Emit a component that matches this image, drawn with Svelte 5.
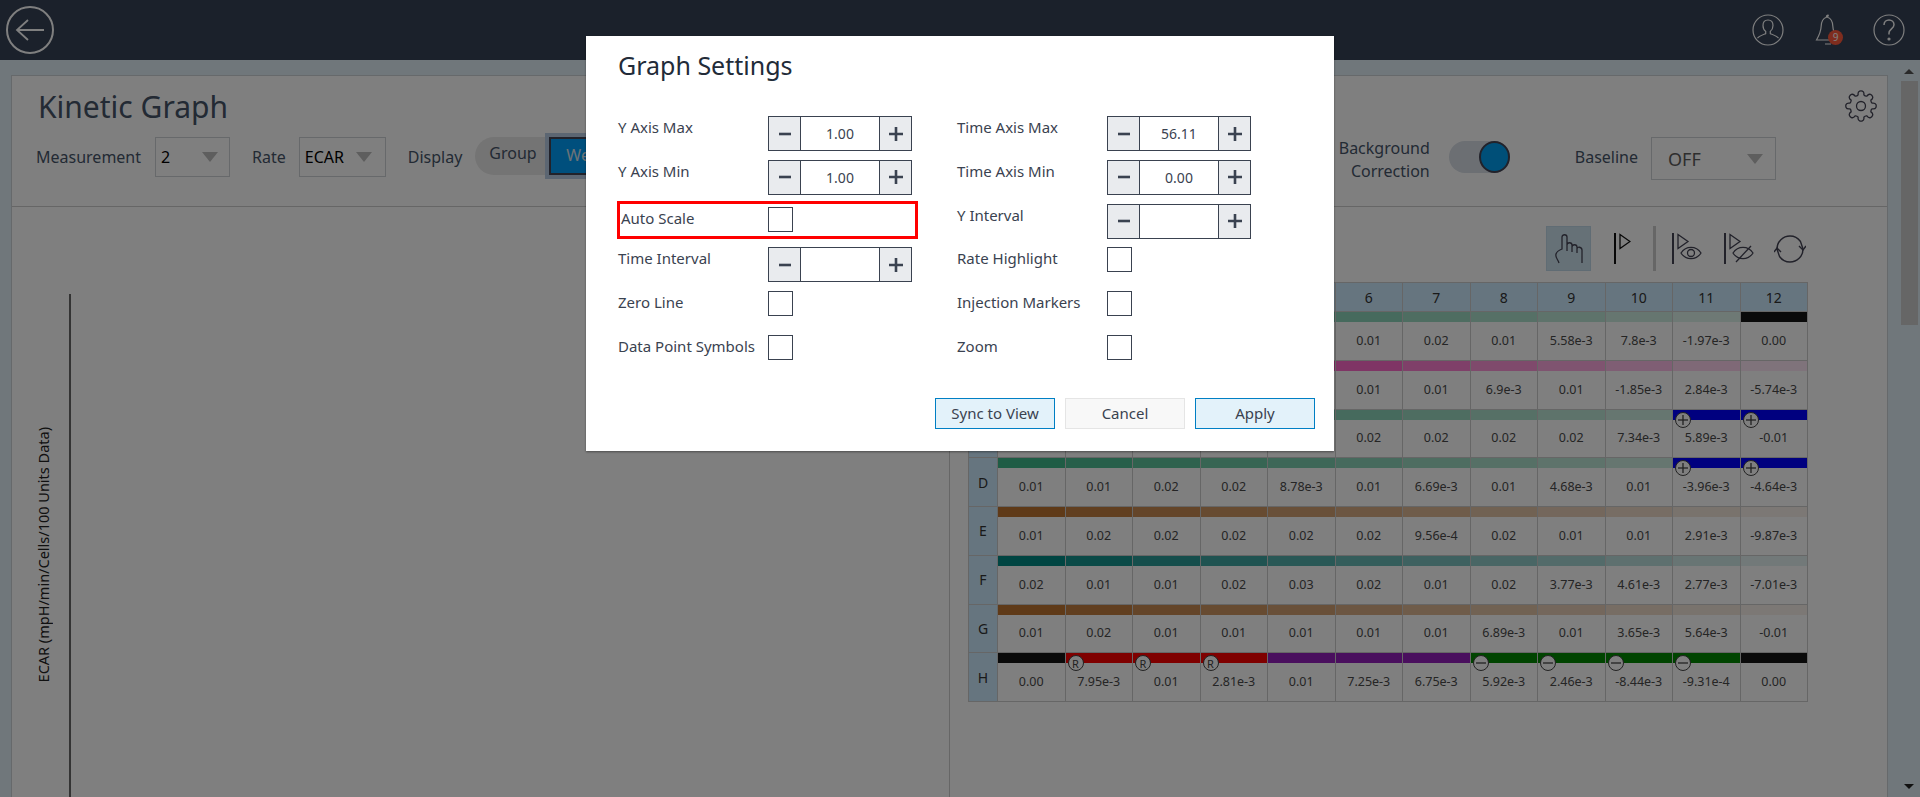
<script>
  const base = { green: '#3eb88a', pink: '#ff05a6', brown: '#be7430', teal: '#008a84' };
  const black = '#141414';
  const blue = '#0000ff';
  const red = '#ff0000';
  const purple = '#941ebc';
  const dark = '#008800';

  const fade = (color, from = 0, to = 11) => {
    const out = [];
    for (let c = 0; c < 12; c++) {
      if (c >= from && c <= to) out.push({ color, alpha: 1 - c * 0.0818 });
      else out.push({ color: black, alpha: 1 });
    }
    return out;
  };
  const solid = (c) => ({ color: c, alpha: 1 });

  const withTail = (strip, tail, badge) => {
    const next = strip.map((s) => ({ ...s }));
    for (const i of tail) { next[i] = { ...solid(badge), mark: '+' }; }
    return next;
  };

  const hRow = [
    solid(black),
    { ...solid(red), mark: 'R' }, { ...solid(red), mark: 'R' }, { ...solid(red), mark: 'R' },
    solid(purple), solid(purple), solid(purple),
    { ...solid(dark), mark: '-' }, { ...solid(dark), mark: '-' }, { ...solid(dark), mark: '-' }, { ...solid(dark), mark: '-' },
    solid(black)
  ];

  // the first five wells of rows A to C sit behind the dialog
  const rows = [
    { id: '', strip: fade(base.green, 0, 10), values: ['','','','','','0.01','0.02','0.01','5.58e-3','7.8e-3','-1.97e-3','0.00'] },
    { id: '', strip: fade(base.pink), values: ['','','','','','0.01','0.01','6.9e-3','0.01','-1.85e-3','2.84e-3','-5.74e-3'] },
    { id: '', strip: withTail(fade(base.green), [10, 11], blue), values: ['','','','','','0.02','0.02','0.02','0.02','7.34e-3','5.89e-3','-0.01'] },
    { id: 'D', strip: withTail(fade(base.green), [10, 11], blue), values: ['0.01','0.01','0.02','0.02','8.78e-3','0.01','6.69e-3','0.01','4.68e-3','0.01','-3.96e-3','-4.64e-3'] },
    { id: 'E', strip: fade(base.brown), values: ['0.01','0.02','0.02','0.02','0.02','0.02','9.56e-4','0.02','0.01','0.01','2.91e-3','-9.87e-3'] },
    { id: 'F', strip: fade(base.teal), values: ['0.02','0.01','0.01','0.02','0.03','0.02','0.01','0.02','3.77e-3','4.61e-3','2.77e-3','-7.01e-3'] },
    { id: 'G', strip: fade(base.brown), values: ['0.01','0.02','0.01','0.01','0.01','0.01','0.01','6.89e-3','0.01','3.65e-3','5.64e-3','-0.01'] },
    { id: 'H', strip: hRow, values: ['0.00','7.95e-3','0.01','2.81e-3','0.01','7.25e-3','6.75e-3','5.92e-3','2.46e-3','-8.44e-3','-9.31e-4','0.00'] }
  ];

  const columns = ['', '', '', '', '', 6, 7, 8, 9, 10, 11, 12];

  // left and right column of the dialog, row by row
  const settings = [
    { label: 'Y Axis Max', kind: 'step', value: '1.00' },
    { label: 'Time Axis Max', kind: 'step', value: '56.11' },
    { label: 'Y Axis Min', kind: 'step', value: '1.00' },
    { label: 'Time Axis Min', kind: 'step', value: '0.00' },
    { label: 'Auto Scale', kind: 'check', marked: true },
    { label: 'Y Interval', kind: 'step', value: '' },
    { label: 'Time Interval', kind: 'step', value: '' },
    { label: 'Rate Highlight', kind: 'check' },
    { label: 'Zero Line', kind: 'check' },
    { label: 'Injection Markers', kind: 'check' },
    { label: 'Data Point Symbols', kind: 'check' },
    { label: 'Zoom', kind: 'check' }
  ];

  function gearPath() {
    const cx = 16, cy = 16, teeth = 8;
    let d = '';
    for (let i = 0; i < teeth; i++) {
      const a = (i / teeth) * Math.PI * 2 - Math.PI / 2;
      const step = (Math.PI * 2) / teeth;
      const pt = (r, t) => `${(cx + r * Math.cos(t)).toFixed(2)} ${(cy + r * Math.sin(t)).toFixed(2)}`;
      d += (i === 0 ? 'M' : 'L') + pt(11.5, a - step * 0.32);
      d += ' Q' + pt(14.5, a - step * 0.3) + ' ' + pt(15, a - step * 0.12);
      d += ' Q' + pt(15.5, a) + ' ' + pt(15, a + step * 0.12);
      d += ' Q' + pt(14.5, a + step * 0.3) + ' ' + pt(11.5, a + step * 0.32);
      d += ' Q' + pt(10.5, a + step * 0.5) + ' ' + pt(11.5, a + step * 0.68) + ' ';
    }
    return d + 'Z';
  }
</script>

<div class="page">
  <header class="topbar">
    <svg class="back" width="48" height="48" viewBox="0 0 48 48" fill="none" stroke="#fff" stroke-width="2">
      <circle cx="24" cy="24" r="23" />
      <path d="M38 24H11M22 14 11 24l11 10" stroke-width="1.8" />
    </svg>
    <div class="top-icons">
      <svg width="32" height="32" viewBox="0 0 32 32" fill="none" stroke="#fff" stroke-width="1.2">
        <circle cx="16" cy="16" r="15" />
        <path d="M16 6c-3.4 0-5 2.6-5 5.4 0 2.4 1 4.6 2.7 6v2.2c-3 1.2-6.5 2.4-8.2 4.6M16 6c3.4 0 5 2.6 5 5.4 0 2.4-1 4.6-2.7 6v2.2c3 1.2 6.5 2.4 8.2 4.6" />
      </svg>
      <div class="bell">
        <svg width="26" height="32" viewBox="0 0 26 32" fill="none" stroke="#fff" stroke-width="1.2">
          <path d="M13 1c-1 0-1.6.8-1.6 2.2C7.6 4.4 6.4 8 6.2 12c-.3 6-2.4 10-4.7 14h21c-2.300-4-4.400-8-4.700-14-.2-4-1.400-7.600-5.200-8.800C12.600 1.800 14 1 13 1ZM10 30h6" />
        </svg>
        <span class="badge-count">9</span>
      </div>
      <svg width="32" height="32" viewBox="0 0 32 32" fill="none" stroke="#fff" stroke-width="1.2">
        <circle cx="16" cy="16" r="15" />
        <path d="M11 11c0-3 2.200-5 5-5s5 2 5 4.800c0 3.800-5 4.400-5 8.200v1.500" stroke-width="1.500" />
        <circle cx="16" cy="25" r="1" fill="#fff" />
      </svg>
    </div>
  </header>

  <div class="workspace">
    <main class="card">
      <section class="card-head">
        <div class="title-row">
          <h1>Kinetic Graph</h1>
          <svg width="32" height="32" viewBox="0 0 32 32" fill="none" stroke="#445" stroke-width="1.3">
            <path d={gearPath()} />
            <circle cx="16" cy="16" r="4.500" />
          </svg>
        </div>
        <div class="toolbar">
          <span class="tool-label first">Measurement</span>
          <div class="select measure"><span>2</span><i></i></div>
          <span class="tool-label rate">Rate</span>
          <div class="select rate-select"><span>ECAR</span><i></i></div>
          <span class="tool-label display">Display</span>
          <div class="segments">
            <span class="seg-group">Group</span>
            <span class="seg-well">Well</span>
          </div>
          <div class="correction">Background<br />Correction</div>
          <div class="switch"><span></span></div>
          <span class="tool-label baseline">Baseline</span>
          <div class="select base-select"><span>OFF</span><i></i></div>
        </div>
      </section>

      <section class="card-body">
        <div class="graph">
          <div class="axis-title">ECAR (mpH/min/Cells/100 Units Data)</div>
          <div class="axis-line"></div>
        </div>

        <div class="plate">
          <div class="tools">
            <button class="tool active" aria-label="Select">
              <svg width="28" height="30" viewBox="0 0 28 30" fill="none" stroke="#445" stroke-width="1.300">
                <path d="M4 29C3 25 0 24 1 20c.7-2.600 3.500-4 6-5V3c0-3 5-3 5 0v14M12 11c0-3 5-3 5 0v7M17 13c0-3 5-3 5 0v6M22 15c0-3 5-2 5 1v13" />
              </svg>
            </button>
            <svg class="flag" width="17" height="31" viewBox="0 0 17 31" fill="none" stroke="#111">
              <path d="M1 0v31" stroke-width="2" />
              <path d="M6 1.500 16 8.500 6 15.500Z" stroke-width="1.300" />
            </svg>
            <span class="sep"></span>
            <svg class="flag-eye" width="30" height="31" viewBox="0 0 30 31" fill="none" stroke="#445">
              <path d="M1 0v31" stroke-width="2" />
              <path d="M6 1.500 16 8.500 6 15.500Z" stroke-width="1.300" />
              <path d="M9 20c5-7.500 15-7.500 20 0-5 7.500-15 7.500-20 0Z" stroke-width="1.300" />
              <circle cx="19" cy="20" r="3.500" stroke-width="1.300" />
            </svg>
            <svg class="flag-hide" width="30" height="31" viewBox="0 0 30 31" fill="none" stroke="#445">
              <path d="M1 0v31" stroke-width="2" />
              <path d="M6 1.500 16 8.500 6 15.500Z" stroke-width="1.300" />
              <path d="M9 20c5-7.500 15-7.500 20 0-5 7.500-15 7.500-20 0Z" stroke-width="1.300" />
              <path d="M12 29 27 13" stroke-width="1.300" />
            </svg>
            <svg class="refresh" width="32" height="32" viewBox="0 0 32 32" fill="none" stroke="#445" stroke-width="1.400">
              <path d="M3 16C3 8.500 9 3 16 3c4.500 0 8 2 10.500 5.500L29 16M29 16c0 7.500-6 13-13 13-4.500 0-8-2-10.500-5.500L3 16" />
              <path d="M25 13l4 4 3-4M0 19l3-4 4 4" />
            </svg>
          </div>

          <div class="table">
            <div class="head corner"></div>
            {#each columns as col}
              <div class="head">{col}</div>
            {/each}
            {#each rows as row}
              <div class="head row-id">{row.id}</div>
              {#each row.values as value, i}
                <div class="cell">
                  <div class="strip" style="background:{row.strip[i].color};opacity:{row.strip[i].alpha}"></div>
                  {#if row.strip[i].mark}
                    <span class="mark">
                      {#if row.strip[i].mark === 'R'}R
                      {:else}
                        <svg width="12" height="12" viewBox="0 0 12 12" stroke="#444" stroke-width="1.300">
                          <path d="M1 6h10" />
                          {#if row.strip[i].mark === '+'}<path d="M6 1v10" />{/if}
                        </svg>
                      {/if}
                    </span>
                  {/if}
                  <div class="value">{value}</div>
                </div>
              {/each}
            {/each}
          </div>
        </div>
      </section>
    </main>

    <aside class="scrollbar">
      <i class="arrow up"></i>
      <div class="thumb"></div>
      <i class="arrow down"></i>
    </aside>
  </div>

  <div class="overlay"></div>

  <div class="dialog">
    <h2>Graph Settings</h2>
    <div class="form">
      {#each settings as item}
        <div class="field" class:marked={item.marked}>
          <span class="field-label">{item.label}</span>
          {#if item.kind === 'step'}
            <div class="stepper">
              <span class="step">
                <svg width="12" height="12" viewBox="0 0 12 12"><path d="M0 6h12" stroke="#3a4250" stroke-width="2.600" /></svg>
              </span>
              <span class="step-value">{item.value}</span>
              <span class="step">
                <svg width="14" height="14" viewBox="0 0 14 14"><path d="M0 7h14M7 0v14" stroke="#3a4250" stroke-width="2.600" /></svg>
              </span>
            </div>
          {:else}
            <span class="checkbox"></span>
          {/if}
        </div>
      {/each}
    </div>
    <div class="actions">
      <button class="primary">Sync to View</button>
      <button class="plain">Cancel</button>
      <button class="primary">Apply</button>
    </div>
  </div>
</div>

<style>
  :global(body) {
    margin: 0;
    overflow: hidden;
  }

  .page {
    position: relative;
    height: 797px;
    overflow: hidden;
    display: flex;
    flex-direction: column;
    background: #e0eef6;
    font-family: "Noto Sans", sans-serif;
    color: #465469;
  }

  .topbar {
    height: 60px;
    flex: none;
    display: flex;
    align-items: center;
    justify-content: space-between;
    padding: 0 15px 0 6px;
    background: #364256;
    box-sizing: border-box;
  }

  .top-icons {
    display: flex;
    align-items: center;
    gap: 30px;
  }

  .bell {
    position: relative;
    display: flex;
    margin-right: 2px;
    margin-left: 1px;
  }

  .badge-count {
    position: absolute;
    left: 13px;
    top: 16px;
    width: 15px;
    height: 15px;
    border-radius: 50%;
    background: #ff5a3c;
    color: #fff;
    font-size: 10px;
    line-height: 15px;
    text-align: center;
  }

  .workspace {
    flex: 1;
    display: flex;
    min-height: 0;
    padding: 15px 0 0 11px;
  }

  .card {
    flex: 1;
    background: #fff;
    border: 1px solid #ccd2d6;
    border-bottom: none;
    box-sizing: border-box;
    display: flex;
    flex-direction: column;
    min-width: 0;
  }

  .card-head {
    height: 131px;
    flex: none;
    box-sizing: border-box;
    padding: 14px 10px 0 24px;
    border-bottom: 1px solid #ccc;
  }

  .title-row {
    height: 40px;
    display: flex;
    align-items: flex-start;
    justify-content: space-between;
    margin-bottom: 7px;
  }

  h1 {
    margin: 0 0 0 2px;
    font-size: 30px;
    font-weight: 400;
    line-height: 34px;
  }

  .toolbar {
    height: 40px;
    display: flex;
    align-items: center;
    font-size: 16px;
    margin-right: 101px;
  }

  .tool-label {
    white-space: nowrap;
    margin-right: 13px;
  }

  .tool-label.first {
    margin-right: 14px;
  }

  .tool-label.rate {
    margin-left: 22px;
  }

  .tool-label.display {
    margin-left: 22px;
  }

  .tool-label.baseline {
    margin-left: 65px;
  }

  .select {
    box-sizing: border-box;
    height: 40px;
    border: 1px solid #ced3d6;
    display: flex;
    align-items: center;
    justify-content: space-between;
    padding: 0 11px 0 5px;
    color: #000;
    font-size: 16px;
    flex: none;
  }

  .select i {
    width: 0;
    height: 0;
    border-left: 8px solid transparent;
    border-right: 8px solid transparent;
    border-top: 10px solid #bcbcbc;
  }

  .measure {
    width: 75px;
  }

  .rate-select {
    width: 87px;
    padding-left: 5px;
    padding-right: 13px;
  }

  .base-select {
    width: 125px;
    height: 43px;
    margin-top: 3px;
    padding: 0 12px 0 16px;
    font-size: 18px;
    color: #5c5c5c;
  }

  .segments {
    display: flex;
    width: 260px;
    height: 38px;
    margin-top: -2px;
    border-radius: 19px 0 0 19px;
    background: #e8e8e8;
    position: relative;
    flex: none;
  }

  .seg-group {
    padding: 0 0 4px 14px;
    width: 56px;
    line-height: 32px;
    flex: none;
  }

  .seg-well {
    position: absolute;
    left: 74px;
    top: 0;
    height: 38px;
    box-sizing: border-box;
    width: 120px;
    padding-left: 15px;
    border: 2px solid #445;
    outline: 4px solid #b8cde4;
    background: #009ffa;
    color: #dbe6ee;
    line-height: 32px;
  }

  .correction {
    margin-left: auto;
    margin-top: 5px;
    text-align: right;
    line-height: 23px;
    white-space: nowrap;
  }

  .switch {
    width: 61px;
    height: 32px;
    margin-left: 19px;
    border-radius: 16px;
    background: #d8dee6;
    display: flex;
    justify-content: flex-end;
    flex: none;
  }

  .switch span {
    width: 31px;
    height: 32px;
    box-sizing: border-box;
    border: 2px solid #445;
    border-radius: 50%;
    background: #009ff0;
  }

  .card-body {
    flex: 1;
    display: flex;
    min-height: 0;
  }

  .graph {
    width: 938px;
    flex: none;
    display: flex;
    border-right: 1px solid #ccc;
    box-sizing: border-box;
    padding-left: 21px;
  }

  .axis-title {
    writing-mode: vertical-rl;
    transform: rotate(180deg);
    align-self: flex-start;
    margin-top: 220px;
    width: 20px;
    line-height: 20px;
    font-size: 14.5px;
    white-space: nowrap;
    color: #222;
  }

  .axis-line {
    width: 2px;
    background: #666;
    margin: 87px 0 0 16px;
  }

  .plate {
    padding: 19px 0 0 18px;
  }

  .tools {
    height: 45px;
    display: flex;
    align-items: center;
    justify-content: flex-end;
    margin-bottom: 11px;
    width: 838px;
  }

  .tool {
    width: 45px;
    height: 45px;
    padding: 0;
    border: 1px solid #c0d8e8;
    background: #cde2ee;
    display: flex;
    align-items: center;
    justify-content: center;
  }

  .flag {
    margin-left: 23px;
  }

  .sep {
    width: 3px;
    height: 45px;
    background: #ccc;
    margin: 0 16px 0 22px;
  }

  .flag-hide {
    margin-left: 22px;
  }

  .refresh {
    margin-left: 20px;
  }

  .table {
    display: grid;
    grid-template-columns: 29px repeat(12, 67.5px);
    grid-template-rows: 29px repeat(8, 48.75px);
    width: max-content;
    border-left: 1px solid #ccc;
    border-top: 1px solid #ccc;
  }

  .head {
    background: #cceafe;
    border-right: 1px solid #ccc;
    border-bottom: 1px solid #ccc;
    display: flex;
    align-items: center;
    justify-content: center;
    font-size: 14px;
    color: #333;
  }

  .cell {
    position: relative;
    display: flex;
    flex-direction: column;
    border-right: 1px solid #ccc;
    border-bottom: 1px solid #ccc;
    min-width: 0;
  }

  .strip {
    height: 10px;
    flex: none;
  }

  .value {
    flex: 1;
    display: flex;
    align-items: center;
    justify-content: center;
    font-size: 12.5px;
    color: #4a4a4a;
    white-space: nowrap;
    padding-bottom: 1px;
  }

  .mark {
    position: absolute;
    left: 2px;
    top: 2px;
    width: 16px;
    height: 16px;
    box-sizing: border-box;
    border: 1.5px solid #444;
    border-radius: 50%;
    background: #fff;
    display: flex;
    align-items: center;
    justify-content: center;
    font-size: 11px;
    color: #444;
  }

  .scrollbar {
    width: 32px;
    flex: none;
    position: relative;
    margin-top: -15px;
    padding-left: 13px;
    box-sizing: border-box;
  }

  .thumb {
    width: 17px;
    height: 244px;
    margin-top: 21px;
    background: #ccc;
  }

  .arrow {
    position: absolute;
    left: 16px;
    width: 0;
    height: 0;
    border-left: 5px solid transparent;
    border-right: 5px solid transparent;
  }

  .arrow.up {
    top: 9px;
    border-bottom: 5px solid #555;
  }

  .arrow.down {
    bottom: 8px;
    border-top: 5px solid #222;
  }

  .overlay {
    position: absolute;
    inset: 0;
    background: rgba(0, 0, 0, 0.5);
  }

  .dialog {
    position: absolute;
    left: 586px;
    top: 36px;
    width: 748px;
    height: 415px;
    box-sizing: border-box;
    background: #fff;
    padding: 13px 19px 0 32px;
    box-shadow: 0 1px 2px rgba(0, 0, 0, 0.4);
    color: #3a4250;
  }

  h2 {
    margin: 0;
    font-size: 25px;
    font-weight: 400;
    line-height: 32px;
    padding-bottom: 2px;
    color: #222b38;
  }

  .form {
    margin-top: 33px;
    display: grid;
    grid-template-columns: 339px 1fr;
    grid-auto-rows: 43.75px;
  }

  .field {
    display: flex;
    align-items: flex-start;
    box-sizing: border-box;
  }

  .field-label {
    width: 150px;
    flex: none;
    font-size: 15px;
    line-height: 22px;
    white-space: nowrap;
  }

  .field.marked {
    width: 301px;
    height: 38px;
    margin: -2.5px 0 0 -1px;
    border: 3px solid #ff0000;
    padding-top: 3px;
    align-items: flex-start;
  }

  .field.marked .field-label {
    width: 148px;
    padding-left: 1px;
    box-sizing: border-box;
    line-height: 23px;
  }

  .stepper {
    width: 144px;
    height: 35px;
    box-sizing: border-box;
    border: 1px solid #3a4250;
    display: flex;
    align-items: stretch;
  }

  .step {
    width: 31px;
    flex: none;
    background: #e9ebee;
    display: flex;
    align-items: center;
    justify-content: center;
  }

  .step:first-child {
    border-right: 1px solid #3a4250;
  }

  .step:last-child {
    border-left: 1px solid #3a4250;
  }

  .step-value {
    flex: 1;
    text-align: center;
    font-size: 14px;
    line-height: 33px;
  }

  .checkbox {
    width: 25px;
    height: 25px;
    box-sizing: border-box;
    border: 1px solid #3a4250;
  }

  .actions {
    margin-top: 19px;
    display: flex;
    justify-content: flex-end;
    gap: 10px;
  }

  button {
    font-family: inherit;
  }

  .actions button {
    width: 120px;
    height: 31px;
    padding: 0;
    font-size: 15px;
    color: #3a4250;
    box-sizing: border-box;
  }

  .primary {
    background: #e3f2fa;
    border: 1px solid #007fc4;
  }

  .plain {
    background: #f8f8f8;
    border: 1px solid #e5e5e5;
  }
</style>
